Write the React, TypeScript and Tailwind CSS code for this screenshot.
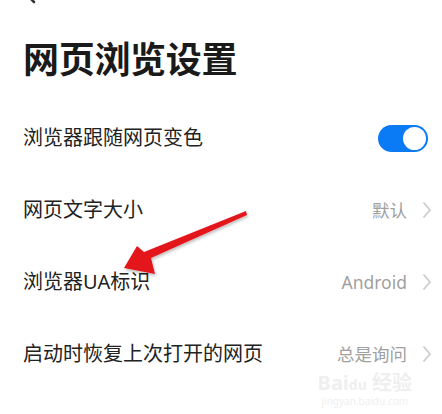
import React from 'react';

const font = { fontFamily: '"Noto Sans", "Noto Sans CJK SC", sans-serif' };

function Chevron() {
    return (
        <svg width="10" height="18" viewBox="0 0 10 18" fill="none" stroke="#cccccc" strokeWidth="1.8" strokeLinecap="round" strokeLinejoin="round">
            <path d="M2 2l6 7-6 7" />
        </svg>
    );
}

function Row({ label, value, toggle }: { label: string; value?: string; toggle?: boolean }) {
    return (
        <div className="h-[72px] flex items-center justify-between pl-[23px] pr-[10px]">
            <span className="text-[20px] text-[#222]">{label}</span>
            {toggle ? (
                <div className="w-[50px] h-[27px] rounded-full bg-[#0b7bf5] flex items-center justify-end px-[2px] mr-[4px]">
                    <div className="w-[23px] h-[23px] rounded-full bg-white" />
                </div>
            ) : (
                <div className="flex items-center gap-[15px]">
                    <span className="text-[17.5px] text-[#a0a0a0]">{value}</span>
                    <Chevron />
                </div>
            )}
        </div>
    );
}

export default function App() {
    return (
        <div className="relative w-[442px] h-[414px] bg-white overflow-hidden" style={font}>
            <div className="h-[40px] relative">
                <svg className="absolute left-[24px] -top-[14px]" width="12" height="18" viewBox="0 0 12 18" fill="none" stroke="#333" strokeWidth="2.5" strokeLinecap="round">
                    <path d="M10 2L3 9l7 7" />
                </svg>
            </div>
            <h1 className="pl-[23px] text-[36px] leading-[40px] font-bold text-[#1a1a1a] tracking-[-0.3px]">网页浏览设置</h1>
            <div className="mt-[22px]">
                <Row label="浏览器跟随网页变色" toggle />
                <Row label="网页文字大小" value="默认" />
                <Row label="浏览器UA标识" value="Android" />
                <Row label="启动时恢复上次打开的网页" value="总是询问" />
            </div>

            <svg className="absolute left-0 top-0 pointer-events-none" width="442" height="414" viewBox="0 0 442 414">
                <defs>
                    <filter id="sh" x="-20%" y="-20%" width="140%" height="140%">
                        <feDropShadow dx="1" dy="2" stdDeviation="1.5" floodColor="#000" floodOpacity="0.25" />
                    </filter>
                </defs>
                <path d="M246 211 L247 215 L151 258 L155 274 L124 268 L137 246 L144 252 Z" fill="#e3171b" filter="url(#sh)" />
            </svg>

            <div className="absolute right-[30px] bottom-[8px] flex flex-col items-center text-[#efefef] leading-none">
                <span className="text-[20px] font-bold">Bai<span className="text-[14px]">du</span> 经验</span>
                <span className="text-[10px] mt-[3px]">jingyan.baidu.com</span>
            </div>
        </div>
    );
}
